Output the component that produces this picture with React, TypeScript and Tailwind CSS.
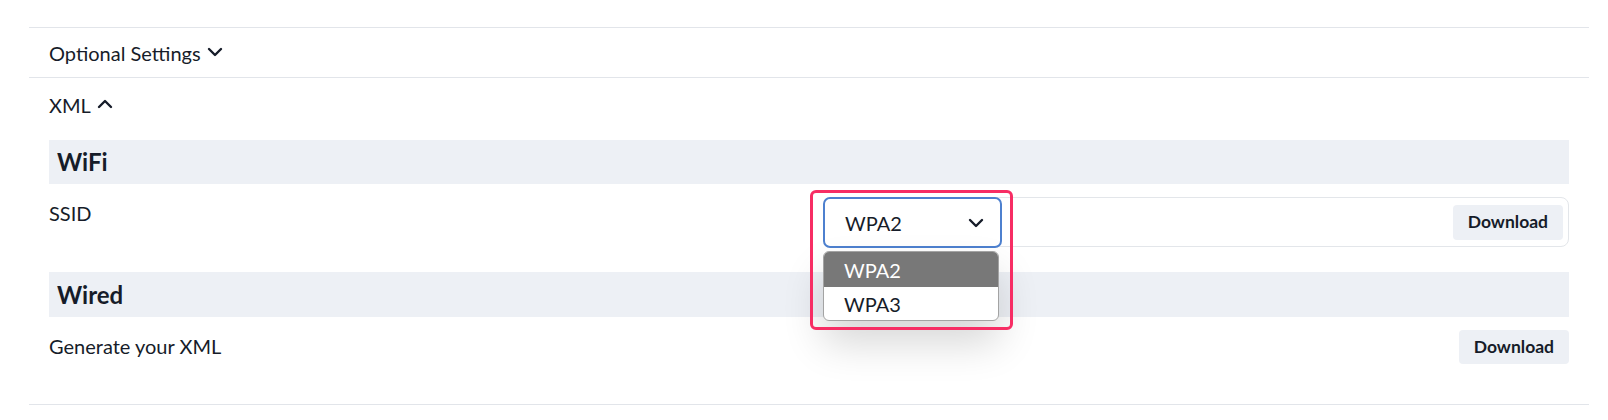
import React from "react";

const Chevron = ({ up = false, className = "" }: { up?: boolean; className?: string }) => (
  <svg width="24" height="24" viewBox="0 0 24 24" fill="none" stroke="currentColor" strokeWidth="2.4" strokeLinecap="round" strokeLinejoin="round" className={className}>
    {up ? <path d="m6 15 6-6 6 6" /> : <path d="m6 9 6 6 6-6" />}
  </svg>
);

export default function App() {
  return (
    <div className="w-[1608px] h-[420px] bg-white pt-[27px] text-[#161c29]" style={{ fontFamily: "Lato, 'Noto Sans', sans-serif" }}>
      <div className="ml-[29px] w-[1560px] border-t border-b border-[#e2e5ea]">
        <div className="h-[50px] px-[20px] flex items-center border-b border-[#e2e5ea]">
          <span className="text-[20px] leading-[30px]">Optional Settings</span>
          <Chevron className="ml-[2px] -mt-[2px]" />
        </div>
        <div className="px-[20px] pb-[40px]">
          <div className="h-[54px] flex items-center">
            <span className="text-[20px] leading-[30px]">XML</span>
            <Chevron up className="ml-[2px] -mt-[3px]" />
          </div>
          <div className="mt-[8px] h-[44px] bg-[#edf0f5] px-[8px] flex items-center">
            <span className="text-[24px] font-bold leading-[30px]">WiFi</span>
          </div>
          <div className="mt-[13px] flex">
            <div className="w-[774px] text-[20px] leading-[30px] pt-[1px]">SSID</div>
            <div className="flex-1 h-[50px] border border-[#e3e6ea] rounded-[8px] flex items-center justify-between relative">
              <div className="relative -ml-px -mt-px self-start">
                <div className="w-[179px] h-[51px] border-2 border-[#4d80cf] rounded-[7px] bg-white flex items-center justify-between pl-[20px] pr-[12px]">
                  <span className="text-[20px] leading-[30px]">WPA2</span>
                  <Chevron className="w-[24px] h-[24px]" />
                </div>
                <div className="absolute left-0 top-[54px] w-[176px] rounded-[6px] border border-[#a3a3a3] bg-white overflow-hidden shadow-[0_22px_40px_rgba(0,0,0,0.16)] z-10">
                  <div className="h-[35px] bg-[#787878] text-white pl-[20px] flex items-center text-[20px]">WPA2</div>
                  <div className="h-[33px] pl-[20px] flex items-center text-[20px]">WPA3</div>
                </div>
                <div className="absolute left-[-13px] top-[-7px] w-[203px] h-[140px] border-[3px] border-[#f72d64] rounded-[6px] z-20 pointer-events-none" />
              </div>
              <button className="mr-[5px] h-[35px] px-[15px] bg-[#edf0f5] rounded-[4px] text-[17.5px] font-bold">Download</button>
            </div>
          </div>
          <div className="mt-[25px] h-[45px] bg-[#edf0f5] px-[8px] flex items-center">
            <span className="text-[24px] font-bold leading-[30px]">Wired</span>
          </div>
          <div className="mt-[13px] flex items-center justify-between">
            <span className="text-[20px] leading-[30px] -mt-[3px]">Generate your XML</span>
            <button className="h-[34px] px-[15px] bg-[#edf0f5] rounded-[4px] text-[17.5px] font-bold">Download</button>
          </div>
        </div>
      </div>
    </div>
  );
}
